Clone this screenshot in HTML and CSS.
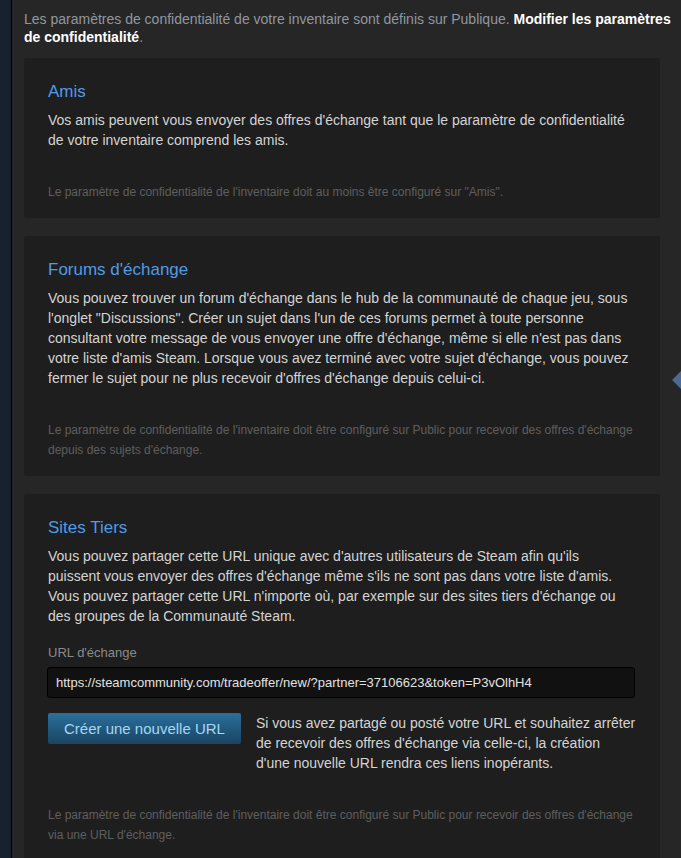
FILE: index.html
```html
<!DOCTYPE html>
<html lang="fr">
<head>
  <meta charset="UTF-8">
  <title>Offres d'échange</title>
  <link rel="stylesheet" href="styles.css">
</head>
<body>
  <div class="page">
    <div class="sidebar"></div>
    <div class="content">
      <p class="privacy">Les paramètres de confidentialité de votre inventaire sont définis sur Publique. <a href="#">Modifier les paramètres de confidentialité</a>.</p>

      <div class="section">
        <h2>Amis</h2>
        <p class="desc">Vos amis peuvent vous envoyer des offres d'échange tant que le paramètre de confidentialité de votre inventaire comprend les amis.</p>
        <p class="note">Le paramètre de confidentialité de l'inventaire doit au moins être configuré sur "Amis".</p>
      </div>

      <div class="section">
        <h2>Forums d'échange</h2>
        <p class="desc">Vous pouvez trouver un forum d'échange dans le hub de la communauté de chaque jeu, sous l'onglet "Discussions". Créer un sujet dans l'un de ces forums permet à toute personne consultant votre message de vous envoyer une offre d'échange, même si elle n'est pas dans votre liste d'amis Steam. Lorsque vous avez terminé avec votre sujet d'échange, vous pouvez fermer le sujet pour ne plus recevoir d'offres d'échange depuis celui-ci.</p>
        <p class="note">Le paramètre de confidentialité de l'inventaire doit être configuré sur Public pour recevoir des offres d'échange depuis des sujets d'échange.</p>
      </div>

      <div class="section">
        <h2>Sites Tiers</h2>
        <p class="desc narrow">Vous pouvez partager cette URL unique avec d'autres utilisateurs de Steam afin qu'ils puissent vous envoyer des offres d'échange même s'ils ne sont pas dans votre liste d'amis. Vous pouvez partager cette URL n'importe où, par exemple sur des sites tiers d'échange ou des groupes de la Communauté Steam.</p>
        <div class="url-label">URL d'échange</div>
        <input class="url-input" type="text" value="https://steamcommunity.com/tradeoffer/new/?partner=37106623&amp;token=P3vOlhH4" readonly>
        <div class="url-actions">
          <button class="btn-blue">Créer une nouvelle URL</button>
          <p class="desc">Si vous avez partagé ou posté votre URL et souhaitez arrêter de recevoir des offres d'échange via celle-ci, la création d'une nouvelle URL rendra ces liens inopérants.</p>
        </div>
        <p class="note">Le paramètre de confidentialité de l'inventaire doit être configuré sur Public pour recevoir des offres d'échange via une URL d'échange.</p>
      </div>
    </div>
    <div class="edge-arrow"></div>
  </div>
</body>
</html>
```

FILE: styles.css
```css
body {
  margin: 0;
  background-color: #262626;
  font-family: Arial, "Liberation Sans", sans-serif;
  overflow: hidden;
}
.page {
  position: relative;
  display: flex;
  min-height: 858px;
}
.sidebar {
  width: 11px;
  flex-shrink: 0;
  background-color: #18212e;
  border-right: 1px solid #000;
}
.content {
  flex: 1;
  padding: 10px 21px 0 12px;
}
.privacy {
  margin: 0 -21px 12px 0;
  font-size: 14px;
  line-height: 18px;
  color: #8f98a0;
}
.privacy a {
  color: #fff;
  font-weight: bold;
  text-decoration: none;
}
.section {
  background-color: #1e1e1e;
  border-radius: 3px;
  padding: 24px 24px 16px 24px;
  margin-bottom: 18px;
}
h2 {
  margin: 0 0 8px 0;
  font-size: 17px;
  font-weight: normal;
  line-height: 20px;
  color: #4f9be6;
}
.desc {
  margin: 0;
  font-size: 14px;
  line-height: 20px;
  color: #d4d4d4;
}
.desc.narrow {
  max-width: 580px;
}
.note {
  margin: 32px 0 0 0;
  font-size: 12px;
  line-height: 20px;
  color: #5e5e5e;
}
.url-label {
  margin-top: 18px;
  font-size: 13px;
  line-height: 18px;
  color: #8a8a8a;
}
.url-input {
  display: block;
  box-sizing: border-box;
  width: 100%;
  height: 31px;
  margin: 5px 0 15px -1px;
  padding: 0 8px;
  background-color: #111;
  border: 1px solid #000;
  border-radius: 3px;
  color: #e2e2e2;
  font-family: Arial, "Liberation Sans", sans-serif;
  font-size: 13px;
}
.url-actions {
  display: flex;
  align-items: flex-start;
  gap: 15px;
}
.btn-blue {
  flex-shrink: 0;
  height: 31px;
  padding: 0 16px;
  border: none;
  border-radius: 2px;
  background: linear-gradient(to bottom, #2a6d99 5%, #1a4664 95%);
  color: #a4d7f5;
  font-family: Arial, "Liberation Sans", sans-serif;
  font-size: 15px;
  cursor: pointer;
}
.edge-arrow {
  position: absolute;
  right: -8px;
  top: 373px;
  width: 14px;
  height: 14px;
  background-color: #4c6b93;
  transform: rotate(45deg);
}
```
